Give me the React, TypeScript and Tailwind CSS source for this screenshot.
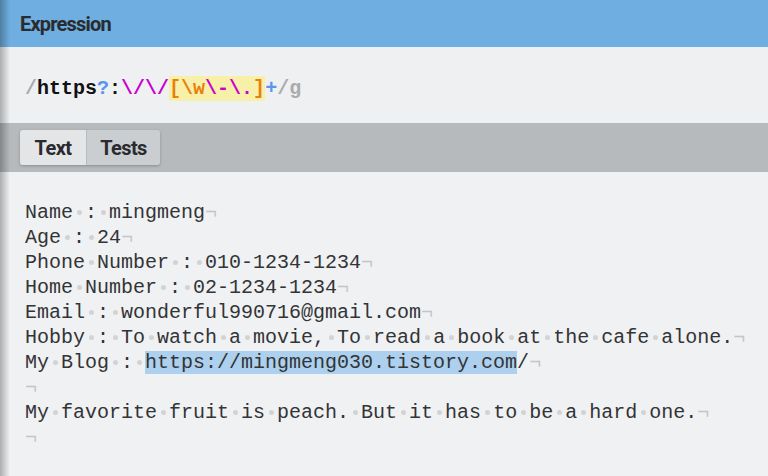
import React from 'react';

const lines: string[] = [
  'Name : mingmeng',
  'Age : 24',
  'Phone Number : 010-1234-1234',
  'Home Number : 02-1234-1234',
  'Email : wonderful990716@gmail.com',
  'Hobby : To watch a movie, To read a book at the cafe alone.',
  'My Blog : https://mingmeng030.tistory.com/',
  '',
  'My favorite fruit is peach. But it has to be a hard one.',
  '',
];

const URL = 'https://mingmeng030.tistory.com';

function Dot() {
  return (
    <span className="inline-flex w-[12px] justify-center align-middle">
      <span className="size-[5px] rounded-full bg-[#d2d3d5]" />
    </span>
  );
}

function Chunk({ text }: { text: string }) {
  const parts = text.split(' ');
  return (
    <>
      {parts.map((p, i) => (
        <React.Fragment key={i}>
          {i > 0 && <Dot />}
          {p}
        </React.Fragment>
      ))}
    </>
  );
}

function Line({ text }: { text: string }) {
  const at = text.indexOf(URL);
  return (
    <div className="h-[25px] whitespace-pre">
      {at >= 0 ? (
        <>
          <Chunk text={text.slice(0, at)} />
          <span className="bg-[#acd0ee]">{URL}</span>
          <Chunk text={text.slice(at + URL.length)} />
        </>
      ) : (
        <Chunk text={text} />
      )}
      <span className="text-[#c4c5c7]">¬</span>
    </div>
  );
}

export default function App() {
  return (
    <div className="relative h-[476px] w-[768px] overflow-hidden bg-[#f0f1f3]">
      {/* Header */}
      <div className="flex h-[47px] items-center bg-[#6eaee0] px-5">
        <span className="font-['Roboto'] text-[20px] font-bold tracking-[-0.8px] text-[#2a2b2e]">Expression</span>
      </div>

      {/* Expression */}
      <div className="flex h-[76px] items-center bg-[#eff0f2] px-[25px] pt-[6px] font-['Liberation_Mono',monospace] text-[20px] font-bold leading-[25px]">
        <span className="text-[#aaabad]">/</span>
        <span className="text-[#111]">https</span>
        <span className="text-[#5c95ee]">?</span>
        <span className="text-[#111]">:</span>
        <span className="text-[#cc00cc]">\/\/</span>
        <span className="bg-[#f6f0a9]">
          <span className="text-[#e8800d]">[\w</span>
          <span className="text-[#cc00cc]">\-\.</span>
          <span className="text-[#e8800d]">]</span>
        </span>
        <span className="text-[#5c95ee]">+</span>
        <span className="text-[#aaabad]">/g</span>
      </div>

      {/* Tabs */}
      <div className="flex h-[49px] items-start bg-[#b6babd] px-5 pt-[7px]">
        <div className="flex h-[35px] overflow-hidden rounded-[3px] shadow-[0_1px_3px_rgba(0,0,0,0.25)] font-['Roboto'] text-[20px] font-bold tracking-[-0.6px] text-[#2a2b2e]">
          <div className="flex w-[66px] items-center justify-center bg-[#e4e5e7]">Text</div>
          <div className="flex w-[74px] items-center justify-center border-l border-[#b9bcbf] bg-[#cbced1]">Tests</div>
        </div>
      </div>

      {/* Text */}
      <div className="px-[25px] pt-[28px] font-['Liberation_Mono',monospace] text-[20px] leading-[25px] text-[#333436]">
        {lines.map((l, i) => (
          <Line key={i} text={l} />
        ))}
      </div>

      {/* left edge shadow */}
      <div className="pointer-events-none absolute inset-y-0 left-0 w-[10px] bg-gradient-to-r from-[rgba(0,0,0,0.28)] to-transparent" />
    </div>
  );
}
